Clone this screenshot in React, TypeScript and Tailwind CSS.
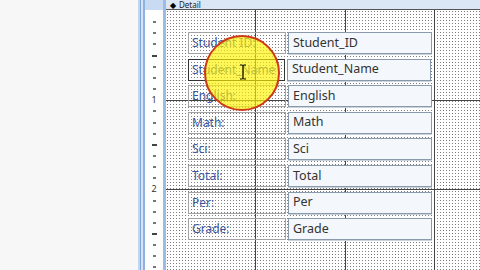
import React from "react";

const fields = [
  { label: "Student ID:", box: "Student_ID" },
  { label: "Student_Name", box: "Student_Name", selected: true },
  { label: "English:", box: "English" },
  { label: "Math:", box: "Math" },
  { label: "Sci:", box: "Sci" },
  { label: "Total:", box: "Total" },
  { label: "Per:", box: "Per" },
  { label: "Grade:", box: "Grade" },
];

// ticks every 1/8 inch on the vertical ruler
const ticks = Array.from({ length: 23 }, (_, i) => i + 1);

function Ruler() {
  return (
    <div className="relative flex-1 bg-white">
      {ticks.map((t) => {
        const top = t * 11.15;
        if (t % 8 === 0) {
          return (
            <span
              key={t}
              className="absolute left-0 right-0 text-center text-[9px] leading-none text-[#333]"
              style={{ top: top - 4 }}
            >
              {t / 8}
            </span>
          );
        }
        const long = t % 4 === 0;
        return (
          <div
            key={t}
            className={
              long
                ? "absolute left-[7px] h-[2px] w-[5px] bg-[#444]"
                : "absolute left-[8px] h-[2px] w-[3px] bg-[#777]"
            }
            style={{ top }}
          />
        );
      })}
    </div>
  );
}

export default function App() {
  return (
    <div className="flex h-[270px] w-[480px] overflow-hidden bg-[#f7f7f7] font-['Noto_Sans',sans-serif]">
      {/* empty area left of the form */}
      <div className="w-[138px] bg-[#f7f7f7]" />

      {/* window border */}
      <div className="flex w-[7px]">
        <div className="w-[2px] bg-[#c4d6ee]" />
        <div className="w-[1px] bg-[#7fa6d8]" />
        <div className="w-[2px] bg-[#d6e4f5]" />
        <div className="w-[2px] bg-[#8eb2e0]" />
      </div>

      {/* vertical ruler */}
      <div className="flex w-[18px] flex-col">
        <div className="h-[10px] bg-[#c9dbf2]" />
        <Ruler />
      </div>
      <div className="w-[3px] bg-[#9dbce4]" />

      {/* design surface */}
      <div className="flex flex-1 flex-col">
        <div className="flex h-[10px] items-center gap-[3px] border-b border-[#555] bg-[#dce7f5] pl-[4px]">
          <span className="text-[8px] leading-[8px] text-black">◆</span>
          <span className="text-[8px] leading-[8px] text-[#222]">Detail</span>
        </div>

        <div className="relative flex-1 bg-white bg-[radial-gradient(circle,#7c7c7c_0.8px,transparent_1px)] bg-[length:3px_3px]">
          {/* inch grid lines */}
          <div className="absolute bottom-0 top-0 left-[89px] w-px bg-[#444]" />
          <div className="absolute bottom-0 top-0 left-[179px] w-px bg-[#444]" />
          <div className="absolute bottom-0 top-0 left-[268px] w-px bg-[#444]" />
          <div className="absolute left-0 right-0 top-[90px] h-px bg-[#444]" />
          <div className="absolute left-0 right-0 top-[179px] h-px bg-[#444]" />

          {/* controls */}
          <div className="relative flex flex-col gap-[4.6px] pl-[22px] pt-[22px]">
            {fields.map((f) => (
              <div key={f.box} className="flex h-[22px] gap-[2px]">
                <div
                  className={
                    f.selected
                      ? "flex w-[97px] items-center border border-[#333] pl-[3px] text-[12px] text-[#3b57a0]"
                      : "flex w-[98px] items-center border border-[#a3a3a3] pl-[3px] text-[12px] text-[#3b57a0]"
                  }
                >
                  {f.label}
                </div>
                <div className="flex w-[144px] items-center border border-[#8a9aab] bg-[#f4f8fc] pl-[4px] text-[12.5px] text-[#333] shadow-[0_1px_0_#c8d3de]">
                  {f.box}
                </div>
              </div>
            ))}
          </div>

          {/* cursor highlight */}
          <div className="absolute left-[38px] top-[25px] h-[76px] w-[76px] rounded-full border-2 border-[#cf3a16] bg-[rgba(255,242,0,0.66)]" />
          <svg
            className="absolute left-[73px] top-[54px]"
            width="8"
            height="16"
            viewBox="0 0 8 16"
          >
            <path
              d="M1 1h2.5M4.5 1H7M4 1v14M1 15h2.5M4.5 15H7"
              stroke="#000"
              strokeWidth="1.2"
              fill="none"
            />
          </svg>
        </div>
      </div>
    </div>
  );
}
